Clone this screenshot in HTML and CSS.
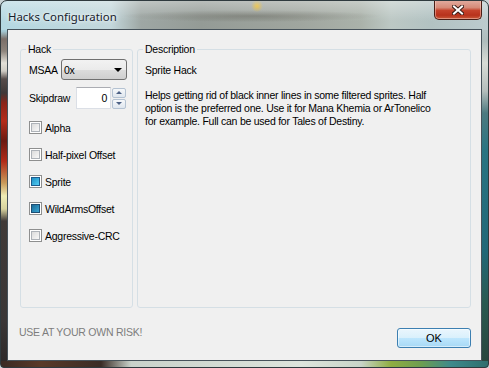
FILE: index.html
```html
<!DOCTYPE html>
<html lang="en">
<head>
    <meta charset="UTF-8">
    <title>Hacks Configuration</title>
    <link rel="stylesheet" href="styles.css">
</head>
<body>
    <div class="window">
        <!-- title bar -->
        <div class="titlebar">
            <span class="title">Hacks Configuration</span>
            <div class="close-btn">
                <svg width="12" height="10" viewBox="0 0 12 10">
                    <path d="M2 1.5 L10 8.5 M10 1.5 L2 8.5" stroke="#3b1e18" stroke-width="4" stroke-linecap="square"/>
                    <path d="M2 1.5 L10 8.5 M10 1.5 L2 8.5" stroke="#ffffff" stroke-width="2" stroke-linecap="square"/>
                </svg>
            </div>
        </div>

        <div class="client">
            <div class="groups">
                <!-- hack options -->
                <fieldset class="group group-hack">
                    <legend>Hack</legend>
                    <div class="group-body">
                        <div class="row row-msaa">
                            <span class="row-label">MSAA</span>
                            <div class="combo">
                                <span>0x</span>
                                <span class="combo-arrow"></span>
                            </div>
                        </div>
                        <div class="row row-skip">
                            <span class="row-label">Skipdraw</span>
                            <div class="spin-edit">0</div>
                            <div class="spin-btns">
                                <span class="spin-btn"><span class="arrow-up"></span></span>
                                <span class="spin-btn"><span class="arrow-down"></span></span>
                            </div>
                        </div>
                        <div class="checks">
                            <div class="check-row"><span class="check"></span>Alpha</div>
                            <div class="check-row"><span class="check"></span>Half-pixel Offset</div>
                            <div class="check-row"><span class="check check-light"></span>Sprite</div>
                            <div class="check-row"><span class="check check-dark"></span>WildArmsOffset</div>
                            <div class="check-row"><span class="check"></span>Aggressive-CRC</div>
                        </div>
                    </div>
                </fieldset>

                <!-- description -->
                <fieldset class="group group-desc">
                    <legend>Description</legend>
                    <div class="group-body">
                        <p class="desc-title">Sprite Hack</p>
                        <p class="desc-text">Helps getting rid of black inner lines in some filtered sprites. Half<br>option is the preferred one. Use it for Mana Khemia or ArTonelico<br>for example. Full can be used for Tales of Destiny.</p>
                    </div>
                </fieldset>
            </div>

            <div class="footer">
                <span class="risk">USE AT YOUR OWN RISK!</span>
                <button class="ok-btn">OK</button>
            </div>
        </div>
    </div>
</body>
</html>
```

FILE: styles.css
```css
* {
    margin: 0;
    padding: 0;
    box-sizing: border-box;
}

body {
    width: 489px;
    height: 368px;
    overflow: hidden;
    background-color: #c9d3d6;
    font-family: "Liberation Sans", Arial, sans-serif;
    font-size: 10.5px;
    letter-spacing: -0.25px;
    color: #000;
}

/* glass frame */
.window {
    width: 489px;
    height: 368px;
    border: 1px solid #2f3a3e;
    border-radius: 7px 7px 4px 4px;
    overflow: hidden;
    background:
        linear-gradient(to bottom, rgba(255, 255, 255, 0.35), rgba(255, 255, 255, 0) 20px) 0 0 / 100% 29px no-repeat,
        radial-gradient(circle 6px at 256px 5px, #e6b41c, rgba(230, 180, 28, 0)) 0 0 / 100% 29px no-repeat,
        radial-gradient(ellipse 130px 6px at 250px 15px, rgba(80, 80, 70, 0.45), rgba(80, 80, 70, 0)) 0 0 / 100% 29px no-repeat,
        linear-gradient(to right, #b4d8e2 0, #c3d7db 110px, #9ea7a4 140px, #949b96 200px, #a0a69f 300px, #aab2aa 360px, #bcc8c4 390px, #b2c2c2 430px, #bccbce 100%) 0 0 / 100% 29px no-repeat,
        linear-gradient(to right, #3a2a24 0, #5a3a28 40px, #3a2c26 100px, #c9d2ca 130px, #dde4dc 300px, #c8d4c8 360px, #8fae42 390px, #6e9e50 420px, #3e8a8c 450px, #2f6e6e 100%) 0 360px / 100% 8px no-repeat,
        linear-gradient(to bottom, #a8d0dc 0, #a5cbd6 30px, #7a6e68 38px, #8d847c 50px, #e2e0d8 62px, #cfccc4 70px, #564c4a 78px, #3e3838 92px, #8a2418 102px, #b42c1a 120px, #6a1a12 140px, #b02a18 160px, #c89a5a 182px, #efedb6 195px, #d6d29e 208px, #403a38 220px, #3a3636 320px, #2c2828 100%) 0 0 / 7px 100% no-repeat,
        linear-gradient(to bottom, #c2d2d6 0, #aebcbc 40px, #d8dcd6 62px, #b4bebc 90px, #4e7a80 112px, #2a7482 150px, #226878 250px, #2a5a52 300px, #28443c 100%) right 0 top 0 / 7px 100% no-repeat,
        #6f7c80;
}

.titlebar {
    height: 28px;
    display: flex;
    justify-content: space-between;
    align-items: flex-start;
}

.title {
    margin: 8px 0 0 7px;
    font-family: "Noto Sans", "Open Sans", sans-serif;
    font-size: 11.4px;
    line-height: 15px;
    letter-spacing: 0;
    color: #16202c;
    text-shadow: 0 0 6px rgba(255, 255, 255, 0.9), 0 0 3px rgba(255, 255, 255, 0.8);
}

.close-btn {
    width: 48px;
    height: 20px;
    margin: -1px 6px 0 0;
    border: 1px solid #4b1e16;
    border-top: none;
    border-radius: 0 0 5px 5px;
    background: linear-gradient(to bottom, #e3aea2 0, #d68a78 40%, #c5432c 55%, #b8321c 80%, #c85a3a 100%);
    box-shadow: inset 0 0 0 1px rgba(255, 220, 210, 0.45);
    display: flex;
    align-items: center;
    justify-content: center;
}

/* client area */
.client {
    width: 475px;
    height: 332px;
    margin-left: 6px;
    border: 1px solid #46525a;
    background-color: #f0f0f0;
}

.groups {
    display: flex;
    gap: 4px;
    padding: 13px 0 0 12px;
}

.group {
    min-width: 0;
    height: 265px;
    border: 1px solid #d5dfe5;
    border-radius: 3px;
    padding: 0;
}

.group legend {
    margin-left: 5px;
    padding: 0 2px;
    line-height: 13px;
}

.group-body {
    padding: 0 7px;
}

.group-hack {
    width: 113px;
}

.group-hack .group-body {
    padding: 0 0 0 8px;
}

.group-desc {
    width: 334px;
}

/* hack rows */
.row {
    display: flex;
    align-items: center;
}

.row-msaa {
    height: 21px;
    margin-top: 3px;
}

.row-skip {
    height: 22px;
    margin-top: 7px;
}

.row-label {
    width: 32px;
}

.row-skip .row-label {
    width: 47px;
}

.combo {
    width: 66px;
    height: 21px;
    border: 1px solid #707070;
    border-radius: 3px;
    background: linear-gradient(to bottom, #f2f2f2 0, #ebebeb 50%, #dddddd 50%, #cfcfcf 100%);
    display: flex;
    align-items: center;
    justify-content: space-between;
    padding: 0 4px 0 2px;
}

.combo-arrow {
    width: 0;
    height: 0;
    border-left: 4px solid transparent;
    border-right: 4px solid transparent;
    border-top: 4px solid #000;
}

.spin-edit {
    width: 35px;
    height: 22px;
    border: 1px solid #dbdfe6;
    border-top-color: #abadb3;
    background-color: #fff;
    text-align: right;
    padding-right: 3px;
    line-height: 20px;
}

.spin-btns {
    margin-left: 1px;
    display: flex;
    flex-direction: column;
    gap: 1px;
}

.spin-btn {
    width: 14px;
    height: 10px;
    border: 1px solid #b4c2d2;
    border-radius: 2px;
    background: linear-gradient(to bottom, #f6f8fa, #dfe6ee);
    display: flex;
    align-items: center;
    justify-content: center;
}

.arrow-up,
.arrow-down {
    width: 0;
    height: 0;
    border-left: 3px solid transparent;
    border-right: 3px solid transparent;
}

.arrow-up {
    border-bottom: 3px solid #4d6185;
}

.arrow-down {
    border-top: 3px solid #4d6185;
}

/* checkboxes */
.checks {
    margin-top: 12px;
    display: flex;
    flex-direction: column;
    gap: 14px;
}

.check-row {
    display: flex;
    align-items: center;
    height: 13px;
}

.check {
    width: 13px;
    height: 13px;
    margin-right: 3px;
    border: 1px solid #8e8f8f;
    background-color: #fff;
    padding: 1px;
    display: flex;
}

.check::after {
    content: "";
    flex: 1;
    border: 1px solid #aeb3b9;
    background: linear-gradient(135deg, #dcdcdc, #f8f8f8);
}

.check-light::after {
    border-color: #1d5c8e;
    background: linear-gradient(135deg, #1f8fc4, #52cdf3);
}

.check-dark::after {
    border-color: #1d4e74;
    background: linear-gradient(135deg, #1a6c98, #3aa6d4);
}

/* description */
.desc-title {
    margin-top: 8px;
    line-height: 13px;
}

.desc-text {
    margin-top: 12px;
    line-height: 13px;
    white-space: nowrap;
}

/* footer */
.footer {
    display: flex;
    justify-content: space-between;
    align-items: flex-start;
    padding: 0 10px 0 11px;
}

.risk {
    margin-top: 18px;
    line-height: 13px;
    color: #7d7d7d;
}

.ok-btn {
    width: 74px;
    height: 20px;
    margin-top: 20px;
    border: 1px solid #3c7fb1;
    border-radius: 3px;
    background: linear-gradient(to bottom, #eaf6fd 0, #d9f0fc 50%, #bee6fd 50%, #a7d9f5 100%);
    box-shadow: inset 0 0 0 1px rgba(255, 255, 255, 0.5);
    font-family: "Liberation Sans", Arial, sans-serif;
    font-size: 11px;
    color: #000;
}
```
